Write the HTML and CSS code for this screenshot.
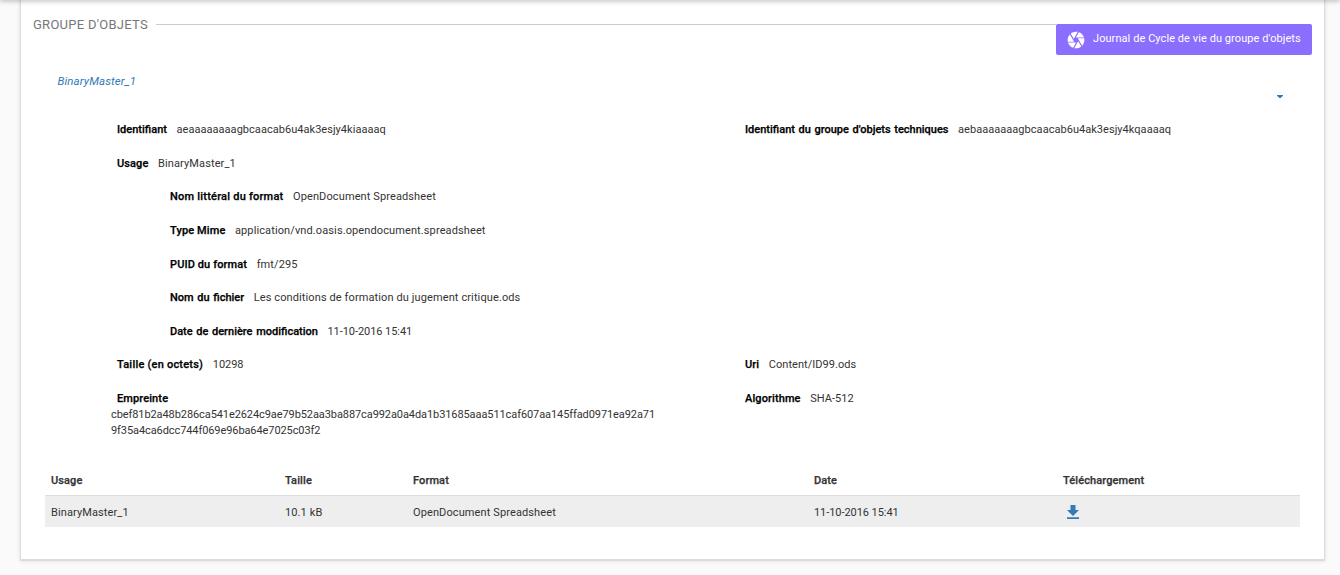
FILE: index.html
```html
<!DOCTYPE html>
<html lang="fr">
<head>
<meta charset="utf-8">
<title>Groupe d'objets</title>
<link rel="stylesheet" href="styles.css">
</head>
<body>
<div class="toolbar-shadow"></div>
<main class="card">
  <header class="section-head">
    <h2 class="section-title">GROUPE D'OBJETS</h2>
    <span class="rule"></span>
    <button class="journal">
      <svg class="journal-icon" viewBox="0 0 24 24"><path fill="currentColor" d="M9.4 10.5l4.77-8.26C13.47 2.09 12.75 2 12 2c-2.4 0-4.6.85-6.32 2.25l3.66 6.35.06-.1zM21.54 9c-.92-2.92-3.15-5.26-6-6.34L11.88 9h9.66zm.26 1h-7.49l.29.5 4.76 8.25C21 16.97 22 14.61 22 12c0-.69-.07-1.35-.2-2zM8.54 12l-3.9-6.75C3.01 7.03 2 9.39 2 12c0 .69.07 1.35.2 2h7.49l-1.15-2zm-6.08 3c.92 2.92 3.15 5.26 6 6.34L12.12 15H2.46zm11.27 0l-3.9 6.76c.7.15 1.42.24 2.17.24 2.4 0 4.6-.85 6.32-2.25l-3.66-6.35-.93 1.6z"/></svg>
      <span class="journal-text">Journal de Cycle de vie du groupe d'objets</span>
    </button>
  </header>
  <div class="panel-head">
    <a class="panel-name">BinaryMaster_1</a>
    <svg class="caret" viewBox="0 0 6 3"><path fill="currentColor" d="M0 0h6v.8L3.6 3H2.4L0 .8z"/></svg>
  </div>
  <div class="details">
    <div class="field"><b class="label ligated">Identifiant</b><span class="value code">aeaaaaaaaagbcaacab6u4ak3esjy4kiaaaaq</span></div>
    <div class="field"><b class="label ligated">Identifiant du groupe d'objets techniques</b><span class="value code">aebaaaaaaagbcaacab6u4ak3esjy4kqaaaaq</span></div>
    <div class="field full"><b class="label">Usage</b><span class="value">BinaryMaster_1</span></div>
    <div class="field full nested"><b class="label wide">Nom littéral du format</b><span class="value">OpenDocument Spreadsheet</span></div>
    <div class="field full nested"><b class="label">Type Mime</b><span class="value">application/vnd.oasis.opendocument.spreadsheet</span></div>
    <div class="field full nested"><b class="label">PUID du format</b><span class="value">fmt/295</span></div>
    <div class="field full nested"><b class="label ligated">Nom du fichier</b><span class="value">Les conditions de formation du jugement critique.ods</span></div>
    <div class="field full nested"><b class="label ligated">Date de dernière modification</b><span class="value date">11-10-2016 15:41</span></div>
    <div class="field"><b class="label wide">Taille (en octets)</b><span class="value date">10298</span></div>
    <div class="field"><b class="label">Uri</b><span class="value code">Content/ID99.ods</span></div>
    <div class="field"><b class="label">Empreinte</b><div class="hash">cbef81b2a48b286ca541e2624c9ae79b52aa3ba887ca992a0a4da1b31685aaa511caf607aa145ffad0971ea92a719f35a4ca6dcc744f069e96ba64e7025c03f2</div></div>
    <div class="field"><b class="label">Algorithme</b><span class="value code">SHA-512</span></div>
  </div>
  <table class="files">
    <thead><tr><th class="c-usage">Usage</th><th class="c-size">Taille</th><th class="c-format">Format</th><th class="c-date">Date</th><th>Téléchargement</th></tr></thead>
    <tbody><tr><td>BinaryMaster_1</td><td>10.1 kB</td><td>OpenDocument Spreadsheet</td><td class="date">11-10-2016 15:41</td><td><svg class="download" viewBox="0 0 12 14"><path fill="currentColor" d="M3.5 0h5v5H12L6 11 0 5h3.5zM0 12.3h12V14H0z"/></svg></td></tr></tbody>
  </table>
</main>
</body>
</html>
```
FILE: styles.css
```css
* { box-sizing: border-box; }
body {
  margin: 0;
  height: 575px;
  overflow: hidden;
  background: #fafafa;
  color: #333;
  font: 11px/16px Roboto, sans-serif;
  letter-spacing: 0.11px;
}
.toolbar-shadow {
  position: absolute;
  top: -4px;
  left: 0;
  width: 100%;
  height: 4px;
  box-shadow: 0 1px 5px rgba(0, 0, 0, 0.3);
}
.card {
  width: 1303px;
  height: 559px;
  margin-left: 21px;
  background: #fff;
  box-shadow: 0 0 0 1px #dcdcdc, 0 1px 0 1px #dcdcdc, 0 1px 4px 1px rgba(0, 0, 0, 0.12);
}
.section-head {
  display: flex;
  align-items: flex-start;
  height: 55px;
  padding: 0 12px;
}
.section-title {
  margin: 16px 8px 0 0;
  font-size: 13px;
  line-height: 18px;
  font-weight: 400;
  letter-spacing: 0.27px;
  color: #777;
}
.rule { flex: 1; height: 1px; margin-top: 24px; background: #ccc; }
.journal {
  display: flex;
  width: 256px;
  height: 31px;
  margin-top: 24px;
  padding: 0 0 0 10px;
  border: 0;
  border-radius: 2px;
  background: #8c6eff;
  color: #fff;
  font: 11px/16px Roboto, sans-serif;
  letter-spacing: 0.07px;
  white-space: nowrap;
}
.journal-icon { width: 20px; height: 20px; margin: 6px 7px 0 0; }
.journal-text { margin-top: 7px; }
.panel-head {
  display: flex;
  justify-content: space-between;
  height: 57px;
  padding: 18px 41px 0 36.5px;
  color: #337ab7;
}
.panel-name { font-size: 11.5px; font-style: italic; letter-spacing: 0.1px; }
.caret { width: 6px; height: 3px; margin-top: 22px; }
.details {
  display: grid;
  grid-template-columns: 628px 1fr;
  grid-auto-rows: 33.6px;
  height: 350px;
  padding-left: 96px;
}
.field { padding-top: 10.2px; white-space: nowrap; }
.full { grid-column: 1 / -1; }
.nested { padding-left: 53px; }
.label {
  margin-right: 9.6px;
  color: #000;
  font-weight: 500;
  -webkit-text-stroke: 0.25px #000;
}
.ligated { letter-spacing: 0; word-spacing: 0.9px; }
.wide { letter-spacing: 0.22px; }
.code { letter-spacing: 0.04px; }
.date { letter-spacing: -0.06px; }
.hash {
  width: 546px;
  margin-left: -6px;
  letter-spacing: -0.087px;
  white-space: normal;
  word-break: break-all;
}
.files {
  width: 1255px;
  margin-left: 24px;
  border-collapse: collapse;
  table-layout: fixed;
  text-align: left;
}
.files th {
  height: 33px;
  padding: 5px 6px 0;
  border-bottom: 1px solid #ddd;
  font-weight: 500;
  -webkit-text-stroke: 0.25px #333;
}
.files td { height: 32px; padding: 3px 6px 0; background: #eee; }
.c-usage { width: 234px; }
.c-size { width: 128px; }
.c-format { width: 401px; }
.c-date { width: 249px; }
.download { display: block; width: 12px; height: 14px; margin: -1px 0 0 4px; color: #337ab7; }
```
